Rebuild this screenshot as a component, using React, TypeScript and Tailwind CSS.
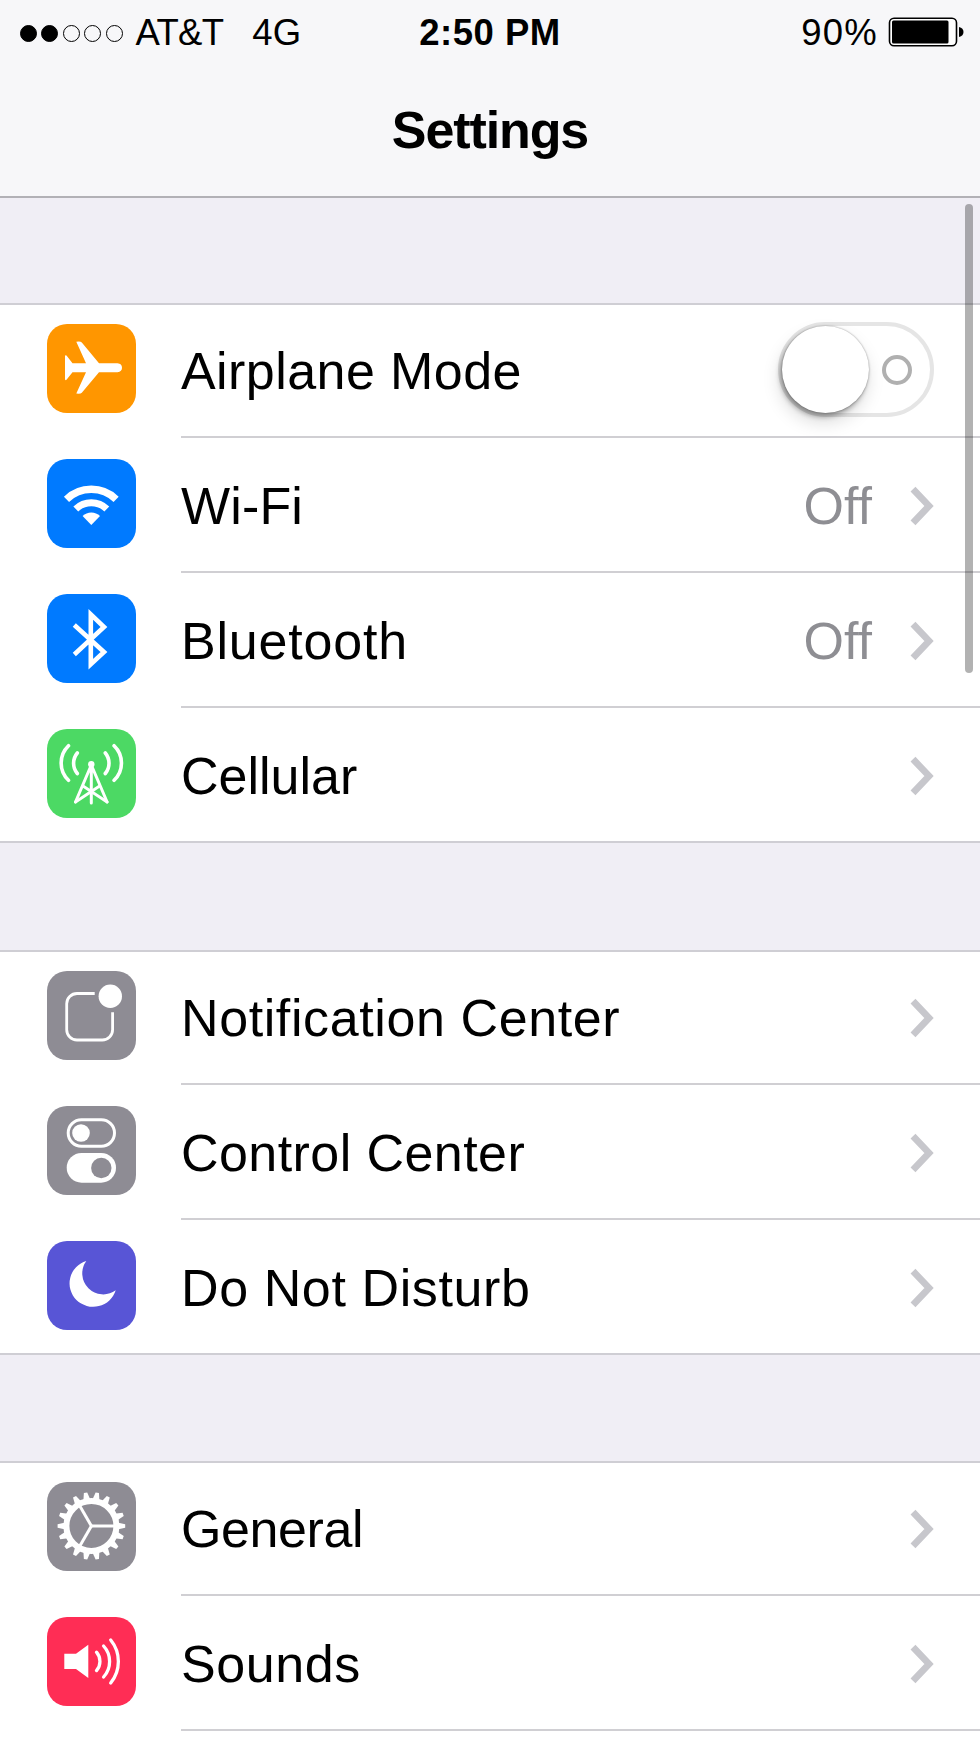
import type { ReactNode } from 'react'
import clsx from 'clsx'

interface SettingsItem {
  label: string
  color: string
  icon: ReactNode
  labelClass?: string
  value?: string
  toggle?: boolean
}

const CELL_STROKE = { fill: 'none', stroke: '#fff', strokeWidth: 3.6, strokeLinecap: 'round' as const }

function AirplaneIcon() {
  return (
    <path
      fill="#fff"
      d="M70.5 39.3Q75 39.8 75 43.7Q75 47.6 70.5 48.2H52L34.8 68.8Q33.5 70 29.3 69.5L39 48.2H25.5L19.5 55.8Q18 56.8 18 55V32.4Q18 30.6 19.5 31.6L25.5 39.3H39L29.3 17.8Q33.5 17 34.8 18.6L52 39.3Z"
    />
  )
}

function WifiIcon() {
  return (
    <>
      <path d="M19.5 40.3A35.7 35.7 0 0 1 69.1 40.3" fill="none" stroke="#fff" strokeWidth="7.4" />
      <path d="M28.8 50A22.3 22.3 0 0 1 59.8 50" fill="none" stroke="#fff" strokeWidth="7" />
      <path d="M44.3 66L35.6 57A12.5 12.5 0 0 1 53 57Z" fill="#fff" />
    </>
  )
}

function BluetoothIcon() {
  return (
    <path
      d="M27.3 31L57 58L43.8 70.3V20.3L57 33L27.3 60.5"
      fill="none"
      stroke="#fff"
      strokeWidth="4.6"
    />
  )
}

function CellularIcon() {
  return (
    <g {...CELL_STROKE}>
      <path d="M21.5 16.7A24 24 0 0 0 21.5 51.3M30.3 24A16 16 0 0 0 30.3 44.5" />
      <path d="M67.1 16.7A24 24 0 0 1 67.1 51.3M58.3 24A16 16 0 0 1 58.3 44.5" />
      <circle cx="44.3" cy="35.2" r="3.2" fill="#fff" stroke="none" />
      <path d="M44.3 36L28.5 73M44.3 36L60.1 73M44.3 36V74" strokeWidth="3" />
      <path d="M28.5 73L52.6 57M60.1 73L36 57" strokeWidth="2.8" />
    </g>
  )
}

function NotificationIcon() {
  return (
    <>
      <path
        d="M47.7 22.5H30A10.3 10.3 0 0 0 19.7 32.8V58.7A10.3 10.3 0 0 0 30 69H55.3A10.3 10.3 0 0 0 65.6 58.7V41.3"
        fill="none"
        stroke="#fff"
        strokeWidth="2.8"
      />
      <circle cx="63.3" cy="25.3" r="11.7" fill="#fff" />
    </>
  )
}

function ControlIcon() {
  return (
    <>
      <rect x="21.2" y="13.8" width="46.3" height="26.4" rx="13.2" fill="none" stroke="#fff" strokeWidth="3" />
      <circle cx="34" cy="27" r="8.8" fill="#fff" />
      <rect x="19.7" y="47" width="49.3" height="29.7" rx="14.85" fill="#fff" />
      <circle cx="54.3" cy="62" r="10.2" fill="#8e8c94" />
    </>
  )
}

function MoonIcon() {
  return <path d="M39.3 20A23.6 23.4 0 1 0 68.7 49.3A21 21 0 0 1 39.3 20Z" fill="#fff" />
}

function GearIcon() {
  const teeth = Array.from({ length: 18 }, (_, i) => i * 20)
  return (
    <g transform="translate(44.4 44)">
      {teeth.map((angle) => (
        <path key={angle} d="M26 -3.6L33.8 -1.7V1.7L26 3.6Z" fill="#fff" transform={`rotate(${angle})`} />
      ))}
      <circle r="25" fill="none" stroke="#fff" strokeWidth="6" />
      {[0, 120, 240].map((angle) => (
        <path key={angle} d="M0 0H24" stroke="#fff" strokeWidth="3" transform={`rotate(${angle})`} />
      ))}
    </g>
  )
}

function SoundsIcon() {
  return (
    <>
      <path d="M17.3 36.7H29L41.3 27.7V61L29 52H17.3Z" fill="#fff" />
      <path
        d="M49.5 35.2A14 14 0 0 1 49.5 53.6M56.6 29A23 23 0 0 1 56.6 60M63.7 23A34 34 0 0 1 63.7 66"
        fill="none"
        stroke="#fff"
        strokeWidth="3.3"
        strokeLinecap="round"
      />
    </>
  )
}

const groups: SettingsItem[][] = [
  [
    {
      label: 'Airplane Mode',
      color: 'bg-[#ff9600]',
      icon: <AirplaneIcon />,
      labelClass: 'tracking-[0.43px]',
      toggle: true,
    },
    { label: 'Wi-Fi', color: 'bg-[#007aff]', icon: <WifiIcon />, labelClass: 'tracking-[0.15px]', value: 'Off' },
    { label: 'Bluetooth', color: 'bg-[#007aff]', icon: <BluetoothIcon />, labelClass: 'tracking-[0.8px]', value: 'Off' },
    { label: 'Cellular', color: 'bg-[#4cd964]', icon: <CellularIcon />, labelClass: 'tracking-normal' },
  ],
  [
    { label: 'Notification Center', color: 'bg-[#8e8c94]', icon: <NotificationIcon /> },
    { label: 'Control Center', color: 'bg-[#8e8c94]', icon: <ControlIcon />, labelClass: 'tracking-[0.43px]' },
    { label: 'Do Not Disturb', color: 'bg-[#5855d6]', icon: <MoonIcon /> },
  ],
  [
    { label: 'General', color: 'bg-[#8e8c94]', icon: <GearIcon />, labelClass: 'tracking-[-0.4px]' },
    { label: 'Sounds', color: 'bg-[#ff2d55]', icon: <SoundsIcon /> },
    { label: '', color: '', icon: null },
  ],
]

function Toggle() {
  return (
    <div className="mt-[19px] mr-px flex h-[95px] w-[156px] items-center justify-between rounded-full border-4 border-[#e5e5e5] pr-[18px]">
      <div className="h-[87px] w-[87px] rounded-full bg-white shadow-[0_0_2px_rgba(0,0,0,0.4),-2px_4px_5px_rgba(0,0,0,0.3),-2px_9px_18px_rgba(0,0,0,0.15)]" />
      <div className="h-[30px] w-[30px] rounded-full border-4 border-[#b0b0b0]" />
    </div>
  )
}

function Chevron() {
  return (
    <svg className="mt-[48px] mr-px h-[40px] w-[24px]" viewBox="0 0 24 40" fill="none">
      <path d="M3 3.2L19 20L3 36.8" stroke="#c7c7cc" strokeWidth="6.8" />
    </svg>
  )
}

function Row({ item, last }: { item: SettingsItem; last: boolean }) {
  return (
    <div className="flex h-[135px] shrink-0 pl-[46.5px]">
      <div className={clsx('mt-[21px] mr-[45.5px] h-[89px] w-[89px] shrink-0 rounded-[20px]', item.color)}>
        <svg className="h-full w-full" viewBox="0 0 89 89">
          {item.icon}
        </svg>
      </div>
      <div className={clsx('flex flex-1 pr-[45px]', !last && 'border-b-2 border-[#d0cfd3]')}>
        <span className={clsx('flex-1 leading-[137px]', item.labelClass ?? 'tracking-[0.6px]')}>{item.label}</span>
        {item.value && <span className="mr-[38px] leading-[137px] text-[#8e8e93]">{item.value}</span>}
        {item.toggle ? <Toggle /> : <Chevron />}
      </div>
    </div>
  )
}

function StatusBar() {
  return (
    <div className="grid h-[66px] grid-cols-3 items-center pr-[16px] pl-[20px] text-[36.5px] leading-none">
      <div className="flex items-center">
        <div className="mr-[13px] flex gap-[4.4px]">
          {[true, true, false, false, false].map((filled, i) => (
            <span
              key={i}
              className={clsx('h-[17px] w-[17px] rounded-full border-[1.5px] border-black', filled && 'bg-black')}
            />
          ))}
        </div>
        <span className="mr-[29px] tracking-[-0.7px]">AT&amp;T</span>
        <span>4G</span>
      </div>
      <span className="-ml-[4px] text-center font-bold tracking-[0.5px]">2:50 PM</span>
      <div className="flex items-center justify-end">
        <span className="mr-[10px] tracking-[1.2px]">90%</span>
        <svg className="-mt-[2px] h-[30px] w-[76px]" viewBox="0 0 76 30">
          <rect x="1.5" y="1.2" width="67" height="27.6" rx="4.5" fill="#fff" stroke="#000" strokeWidth="1.6" />
          <rect x="4" y="3.5" width="56.5" height="23" rx="1.5" />
          <path d="M71 10Q75.5 11 75.5 15T71 20Z" />
        </svg>
      </div>
    </div>
  )
}

export default function App() {
  return (
    <div className="relative flex h-[1740px] w-[980px] flex-col overflow-hidden bg-[#f0eef5] font-['Liberation_Sans',Arial,sans-serif] text-[52px] text-black">
      <header className="h-[198px] shrink-0 border-b-2 border-[#b2b1b6] bg-[#f7f7f9]">
        <StatusBar />
        <h1 className="text-center leading-[128px] font-bold tracking-[-1.1px]">Settings</h1>
      </header>

      {groups.map((items, g) => (
        <section
          key={g}
          className={clsx(
            'shrink-0 bg-white shadow-[inset_0_2px_#cfced4,inset_0_-2px_#cfced4]',
            g === 0 && 'mt-[105px]',
            g === 1 && 'mt-[107px]',
            g === 2 && 'mt-[106px]',
          )}
        >
          {items.map((item, i) => (
            <Row key={i} item={item} last={i === items.length - 1} />
          ))}
        </section>
      ))}

      {/* scroll indicator */}
      <div className="absolute top-[204px] right-[7px] h-[469px] w-[8px] rounded-full bg-black/30" />
    </div>
  )
}
